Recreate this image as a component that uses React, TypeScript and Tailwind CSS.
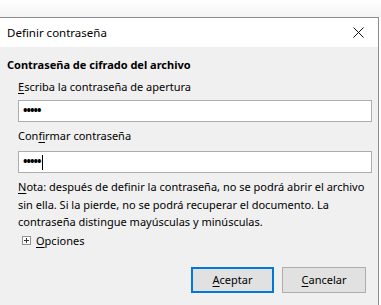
import { useState } from 'react';

const FONT = { fontFamily: '"Noto Sans", "Open Sans", sans-serif' };

export default function App() {
  const [first, setFirst] = useState('•••••');
  const second = '•••••';

  return (
    <div className="relative h-[305px] w-[381px] overflow-hidden bg-white text-[11px] text-black" style={FONT}>
      <div className="h-[17px] bg-gradient-to-b from-white to-[#f3f3f3]" />
      <div className="flex h-[288px] w-[379px] flex-col border-t border-r border-[#8c8c8c]">
        <div className="flex h-[29px] shrink-0 items-center justify-between bg-white pl-[7px] pr-[14px]">
          <span className="text-[11.5px]">Definir contraseña</span>
          <svg width="11" height="11" viewBox="0 0 11 11">
            <path d="M0.5 0.5 L10.5 10.5 M10.5 0.5 L0.5 10.5" stroke="#111" strokeWidth="1" fill="none" />
          </svg>
        </div>

        <div className="flex min-h-0 flex-1 flex-col bg-[#f0f0f0] pb-[12px] pl-[7px] pr-[6px] pt-[10px]">
          <div className="h-[16px] shrink-0 font-bold leading-[16px]">Contraseña de cifrado del archivo</div>

          <div className="ml-[11px] mt-[6px] h-[16px] shrink-0 leading-[16px]">
            <span className="underline underline-offset-2">E</span>scriba la contraseña de apertura
          </div>
          <div className="ml-[11px] mt-[5px] flex h-[22px] shrink-0 items-center border border-[#adadad] bg-white pl-[4px]">
            <input
              value={first}
              onChange={(e) => setFirst(e.target.value)}
              className="w-full bg-transparent text-[12px] font-bold tracking-[-1px] outline-none"
              style={FONT}
            />
          </div>

          <div className="ml-[11px] mt-[6px] h-[16px] shrink-0 leading-[16px]">
            Con<span className="underline underline-offset-2">f</span>irmar contraseña
          </div>
          <div className="ml-[11px] mt-[7px] flex h-[22px] shrink-0 items-center border border-[#adadad] bg-white pl-[4px]">
            <span className="text-[12px] font-bold tracking-[-1px]">{second}</span>
            <span className="ml-[1px] h-[15px] w-[1px] bg-black" />
          </div>

          <p className="ml-[11px] mt-[5px] shrink-0 leading-[17.5px]">
            <span className="underline underline-offset-2">N</span>ota: después de definir la contraseña, no se podrá abrir el archivo sin ella. Si la pierde, no se podrá recuperar el documento. La contraseña distingue mayúsculas y minúsculas.
          </p>

          <div className="ml-[15px] mt-[2px] flex h-[16px] shrink-0 items-center gap-[5px] leading-[16px]">
            <svg width="9" height="9" viewBox="0 0 9 9">
              <rect x="0.5" y="0.5" width="8" height="8" fill="#fff" stroke="#919191" />
              <path d="M2 4.5 H7 M4.5 2 V7" stroke="#333" strokeWidth="1" />
            </svg>
            <span>
              <span className="underline underline-offset-2">O</span>pciones
            </span>
          </div>

          <div className="mt-auto flex shrink-0 justify-end gap-[8px] pr-[6px]">
            <button
              type="button"
              className="flex h-[26px] w-[83px] items-center justify-center border-2 border-[#0078d7] bg-[#e1e1e1] text-[11px]"
              style={FONT}
            >
              <span className="underline underline-offset-2">A</span>ceptar
            </button>
            <button
              type="button"
              className="flex h-[26px] w-[84px] items-center justify-center border border-[#adadad] bg-[#e1e1e1] text-[11px]"
              style={FONT}
            >
              <span className="underline underline-offset-2">C</span>ancelar
            </button>
          </div>
        </div>
      </div>
    </div>
  );
}
